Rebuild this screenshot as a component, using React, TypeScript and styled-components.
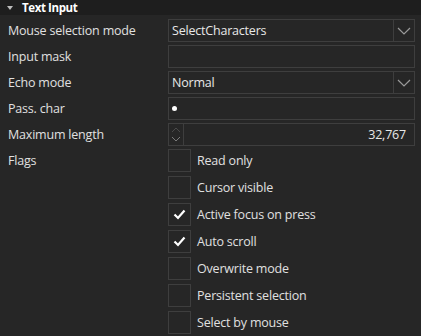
import React from 'react';
import styled, { createGlobalStyle } from 'styled-components';

const GlobalStyle = createGlobalStyle`
  html, body {
    margin: 0;
    padding: 0;
    background: #262626;
  }
  body {
    font-family: 'Open Sans', 'Noto Sans', sans-serif;
    color: #dcdcdc;
  }
`;

const Panel = styled.div`
  width: 421px;
  height: 336px;
  background: #262626;
  overflow: hidden;
`;

const Header = styled.div`
  height: 15px;
  background: #1e1e1e;
  display: flex;
  align-items: center;
  gap: 8px;
  padding-left: 7px;
  font-size: 11.5px;
  font-weight: 700;
  letter-spacing: -0.4px;
  color: #ffffff;
`;

const Triangle = styled.span`
  width: 0;
  height: 0;
  border-left: 3.5px solid transparent;
  border-right: 3.5px solid transparent;
  border-top: 4px solid #bdbdbd;
  margin-right: 1px;
`;

const Grid = styled.div`
  display: grid;
  grid-template-columns: 168px 247px;
  padding-top: 4px;
  row-gap: 3px;
`;

const Label = styled.div`
  height: 23px;
  display: flex;
  align-items: center;
  padding-left: 8px;
  font-size: 12.5px;
  letter-spacing: -0.2px;
  color: #e0e0e0;
`;

const Field = styled.div`
  height: 23px;
  box-sizing: border-box;
  border: 1px solid #3e3e3e;
  display: flex;
  align-items: stretch;
  font-size: 12.5px;
  color: #e8e8e8;
`;

const FieldText = styled.div<{ $right?: boolean }>`
  flex: 1;
  display: flex;
  align-items: center;
  justify-content: ${({ $right }) => ($right ? 'flex-end' : 'flex-start')};
  padding: 0 ${({ $right }) => ($right ? '8px' : '3px')};
  letter-spacing: -0.2px;
`;

const ArrowButton = styled.div`
  width: 20px;
  border-left: 1px solid #3e3e3e;
  display: flex;
  align-items: center;
  justify-content: center;
`;

const Spinner = styled.div`
  width: 14px;
  border-right: 1px solid #3e3e3e;
  display: flex;
  flex-direction: column;
  align-items: center;
  justify-content: center;
  gap: 3px;
`;

const Dot = styled.span`
  width: 5px;
  height: 5px;
  border-radius: 50%;
  background: #ffffff;
`;

const Flags = styled.div`
  display: flex;
  flex-direction: column;
  gap: 4px;
`;

const FlagRow = styled.div`
  display: flex;
  align-items: center;
  gap: 6px;
  height: 23px;
  font-size: 12.5px;
  letter-spacing: -0.2px;
  color: #e0e0e0;
`;

const Box = styled.div`
  width: 23px;
  height: 23px;
  box-sizing: border-box;
  border: 1px solid #3e3e3e;
  display: flex;
  align-items: center;
  justify-content: center;
`;

const FlagsLabel = styled(Label)`
  align-items: flex-start;
  height: auto;
  padding-top: 3px;
`;

const Chevron = () => (
  <svg width="14" height="8" viewBox="0 0 14 8">
    <path d="M1 1 L7 7 L13 1" fill="none" stroke="#9a9a9a" strokeWidth="1.2" />
  </svg>
);

const Check = () => (
  <svg width="13" height="11" viewBox="0 0 13 11">
    <path d="M1.5 5.5 L5 9 L11.5 1.5" fill="none" stroke="#ffffff" strokeWidth="2.2" />
  </svg>
);

const SmallChevron = ({ up }: { up?: boolean }) => (
  <svg width="10" height="6" viewBox="0 0 10 6">
    <path d={up ? 'M1 5 L5 1 L9 5' : 'M1 1 L5 5 L9 1'} fill="none" stroke={up ? '#4a4a4a' : '#7a7a7a'} strokeWidth="1" />
  </svg>
);

const flags = [
  { label: 'Read only', checked: false },
  { label: 'Cursor visible', checked: false },
  { label: 'Active focus on press', checked: true },
  { label: 'Auto scroll', checked: true },
  { label: 'Overwrite mode', checked: false },
  { label: 'Persistent selection', checked: false },
  { label: 'Select by mouse', checked: false },
];

export default function App() {
  return (
    <Panel>
      <GlobalStyle />
      <Header>
        <Triangle />
        Text Input
      </Header>
      <Grid>
        <Label>Mouse selection mode</Label>
        <Field>
          <FieldText>SelectCharacters</FieldText>
          <ArrowButton>
            <Chevron />
          </ArrowButton>
        </Field>

        <Label>Input mask</Label>
        <Field />

        <Label>Echo mode</Label>
        <Field>
          <FieldText>Normal</FieldText>
          <ArrowButton>
            <Chevron />
          </ArrowButton>
        </Field>

        <Label>Pass. char</Label>
        <Field>
          <FieldText>
            <Dot />
          </FieldText>
        </Field>

        <Label>Maximum length</Label>
        <Field>
          <Spinner>
            <SmallChevron up />
            <SmallChevron />
          </Spinner>
          <FieldText $right>32,767</FieldText>
        </Field>

        <FlagsLabel>Flags</FlagsLabel>
        <Flags>
          {flags.map((f) => (
            <FlagRow key={f.label}>
              <Box>{f.checked && <Check />}</Box>
              {f.label}
            </FlagRow>
          ))}
        </Flags>
      </Grid>
    </Panel>
  );
}
